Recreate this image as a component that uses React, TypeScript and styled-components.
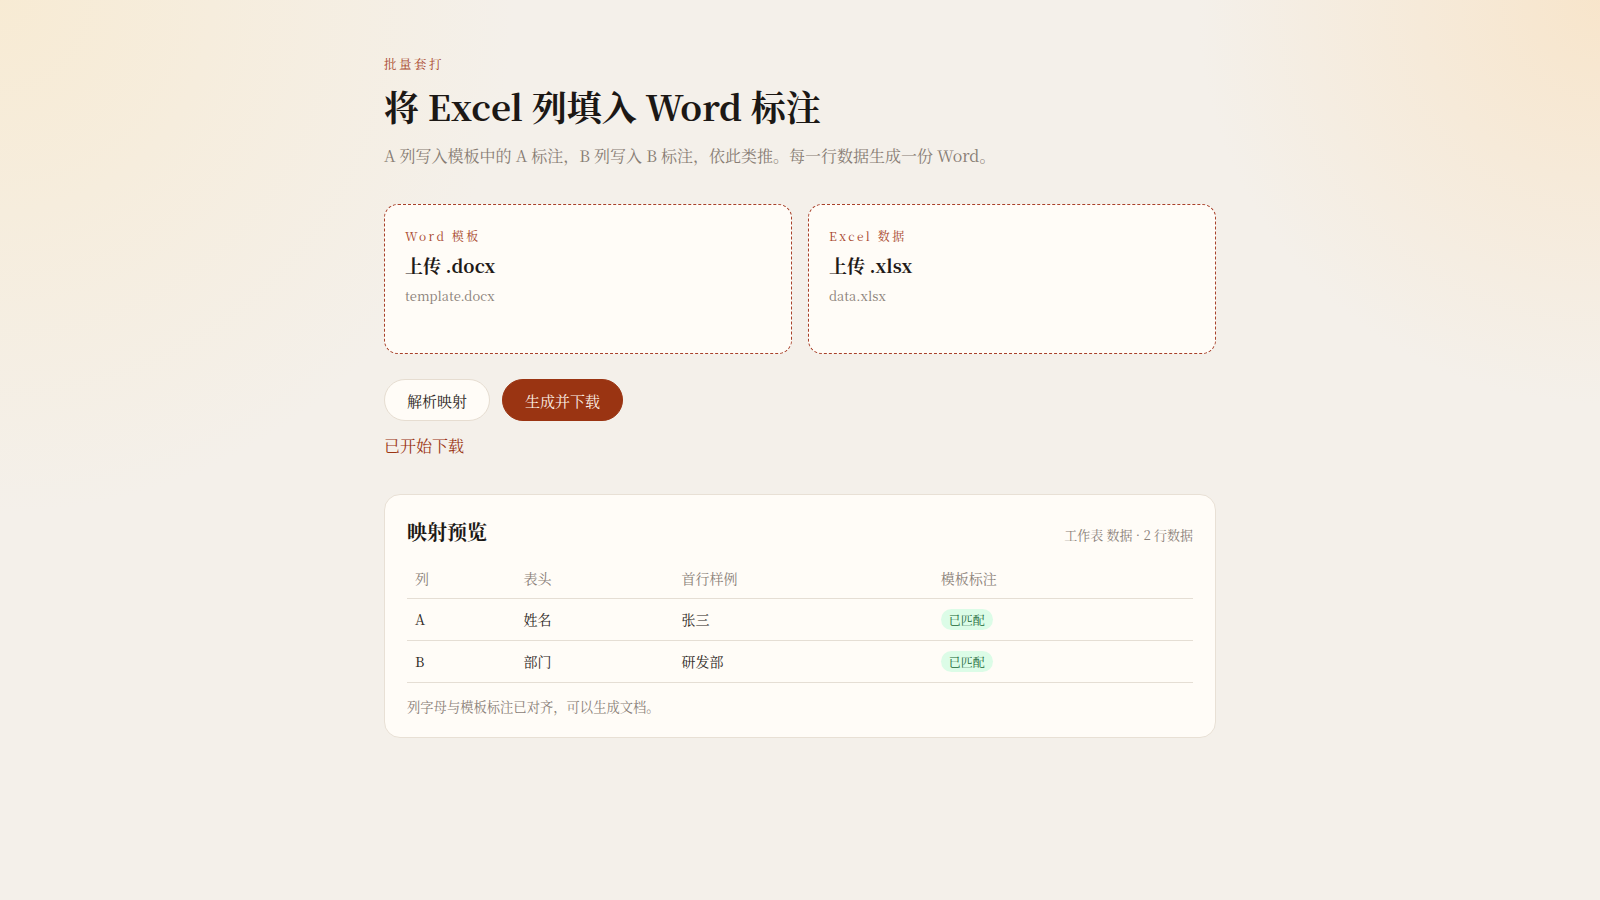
import styled, { createGlobalStyle } from "styled-components";

const GlobalStyle = createGlobalStyle`
  html, body {
    margin: 0;
    padding: 0;
  }
  body {
    min-height: 100vh;
    background:
      radial-gradient(circle at 0% 0%, rgba(248, 234, 208, 0.85) 0, rgba(248, 234, 208, 0) 28%),
      radial-gradient(circle at 100% 0%, rgba(248, 228, 200, 0.9) 0, rgba(248, 228, 200, 0) 22%),
      #f4f0ea;
    font-family: "Noto Serif CJK SC", "Liberation Serif", "Noto Sans CJK SC", serif;
    color: #1f1a17;
  }
`;

const rows = [
  { col: "A", header: "姓名", sample: "张三" },
  { col: "B", header: "部门", sample: "研发部" },
];

export default function App() {
  return (
    <>
      <GlobalStyle />
      <Page>
        <Eyebrow>批量套打</Eyebrow>
        <Title>将 Excel 列填入 Word 标注</Title>
        <Lead>A 列写入模板中的 A 标注，B 列写入 B 标注，依此类推。每一行数据生成一份 Word。</Lead>

        <UploadGrid>
          <DropZone>
            <ZoneLabel>Word 模板</ZoneLabel>
            <ZoneTitle>上传 .docx</ZoneTitle>
            <FileName>template.docx</FileName>
          </DropZone>
          <DropZone>
            <ZoneLabel>Excel 数据</ZoneLabel>
            <ZoneTitle>上传 .xlsx</ZoneTitle>
            <FileName>data.xlsx</FileName>
          </DropZone>
        </UploadGrid>

        <Actions>
          <PillButton>解析映射</PillButton>
          <PillButton $primary>生成并下载</PillButton>
        </Actions>
        <Status>已开始下载</Status>

        <PreviewCard>
          <PreviewHead>
            <PreviewTitle>映射预览</PreviewTitle>
            <PreviewMeta>工作表 数据 · 2 行数据</PreviewMeta>
          </PreviewHead>
          <Table>
            <colgroup>
              <col style={{ width: "13.8%" }} />
              <col style={{ width: "20.1%" }} />
              <col style={{ width: "33%" }} />
              <col />
            </colgroup>
            <thead>
              <tr>
                <Th>列</Th>
                <Th>表头</Th>
                <Th>首行样例</Th>
                <Th>模板标注</Th>
              </tr>
            </thead>
            <tbody>
              {rows.map((r) => (
                <tr key={r.col}>
                  <Td>{r.col}</Td>
                  <Td>{r.header}</Td>
                  <Td>{r.sample}</Td>
                  <Td>
                    <Badge>已匹配</Badge>
                  </Td>
                </tr>
              ))}
            </tbody>
          </Table>
          <Note>列字母与模板标注已对齐，可以生成文档。</Note>
        </PreviewCard>
      </Page>
    </>
  );
}

const Page = styled.main`
  max-width: 832px;
  margin: 0 auto;
  padding: 54px 0 80px;
`;

const Eyebrow = styled.div`
  font-size: 12.5px;
  line-height: 20px;
  letter-spacing: 0.2em;
  color: #a8472c;
`;

const Title = styled.h1`
  margin: 8px 0 0;
  font-size: 35px;
  line-height: 48px;
  font-weight: 700;
  color: #1c1815;
`;

const Lead = styled.p`
  margin: 12px 0 0;
  font-size: 16px;
  line-height: 27px;
  color: #877c73;
`;

const UploadGrid = styled.div`
  display: grid;
  grid-template-columns: 1fr 1fr;
  gap: 16px;
  margin-top: 35px;
`;

const DropZone = styled.div`
  min-height: 150px;
  box-sizing: border-box;
  padding: 21px 20px;
  border: 1px dashed #a8412a;
  border-radius: 14px;
  background: #fffcf7;
`;

const ZoneLabel = styled.div`
  font-size: 12px;
  line-height: 20px;
  letter-spacing: 0.2em;
  color: #a8472c;
`;

const ZoneTitle = styled.div`
  margin-top: 5px;
  font-size: 18px;
  line-height: 28px;
  font-weight: 700;
  color: #1f1a17;
`;

const FileName = styled.div`
  margin-top: 6px;
  font-size: 13px;
  line-height: 22px;
  color: #8a8078;
`;

const Actions = styled.div`
  display: flex;
  gap: 12px;
  margin-top: 25px;
`;

const PillButton = styled.button<{ $primary?: boolean }>`
  height: 42px;
  padding: 0 22px;
  border-radius: 999px;
  border: 1px solid ${(p) => (p.$primary ? "#9a3412" : "#e6ddd1")};
  background: ${(p) => (p.$primary ? "#9a3412" : "#fffcf7")};
  color: ${(p) => (p.$primary ? "#fdf1e7" : "#2a2420")};
  font-family: inherit;
  font-size: 15px;
  cursor: pointer;
`;

const Status = styled.div`
  margin-top: 12px;
  font-size: 16px;
  line-height: 25px;
  color: #9a3412;
`;

const PreviewCard = styled.section`
  margin-top: 36px;
  padding: 22px 22px 20px;
  border: 1px solid #e8e0d5;
  border-radius: 16px;
  background: #fffcf7;
`;

const PreviewHead = styled.div`
  display: flex;
  justify-content: space-between;
  align-items: baseline;
`;

const PreviewTitle = styled.h2`
  margin: 0;
  font-size: 20px;
  line-height: 30px;
  font-weight: 700;
  color: #1c1815;
`;

const PreviewMeta = styled.span`
  font-size: 13px;
  color: #8a8078;
`;

const Table = styled.table`
  width: 100%;
  margin-top: 11px;
  border-collapse: collapse;
  table-layout: fixed;
`;

const Th = styled.th`
  padding: 9px 8px 9px;
  text-align: left;
  font-size: 14px;
  line-height: 22px;
  font-weight: 400;
  color: #8a8078;
  border-bottom: 1px solid #e5ded4;
`;

const Td = styled.td`
  padding: 9px 8px;
  font-size: 14px;
  line-height: 23px;
  color: #2a2420;
  border-bottom: 1px solid #e5ded4;
`;

const Badge = styled.span`
  display: inline-block;
  padding: 2px 8px;
  border-radius: 999px;
  background: #dcfce7;
  color: #166534;
  font-size: 12px;
  line-height: 17px;
`;

const Note = styled.p`
  margin: 14px 0 0;
  font-size: 13.3px;
  line-height: 20px;
  color: #8a8078;
`;
